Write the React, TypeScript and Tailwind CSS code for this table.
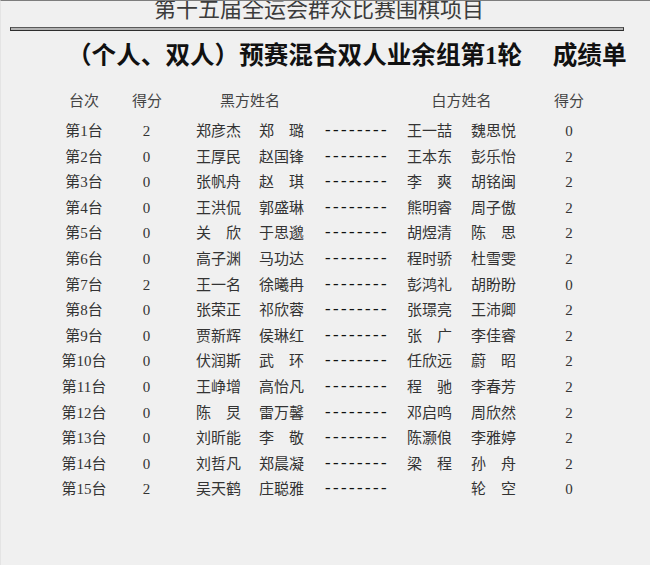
import React from "react";

type Row = {
  b1: string;
  b2: string;
  w1: string;
  w2: string;
  bs: string;
  ws: string;
};

const rows: Row[] = [
  { b1: "郑彦杰", b2: "郑璐", w1: "王一喆", w2: "魏思悦", bs: "2", ws: "0" },
  { b1: "王厚民", b2: "赵国锋", w1: "王本东", w2: "彭乐怡", bs: "0", ws: "2" },
  { b1: "张帆舟", b2: "赵琪", w1: "李爽", w2: "胡铭闽", bs: "0", ws: "2" },
  { b1: "王洪侃", b2: "郭盛琳", w1: "熊明睿", w2: "周子傲", bs: "0", ws: "2" },
  { b1: "关欣", b2: "于思邈", w1: "胡煜清", w2: "陈思", bs: "0", ws: "2" },
  { b1: "高子渊", b2: "马功达", w1: "程时骄", w2: "杜雪雯", bs: "0", ws: "2" },
  { b1: "王一名", b2: "徐曦冉", w1: "彭鸿礼", w2: "胡盼盼", bs: "2", ws: "0" },
  { b1: "张荣正", b2: "祁欣蓉", w1: "张璟亮", w2: "王沛卿", bs: "0", ws: "2" },
  { b1: "贾新辉", b2: "侯琳红", w1: "张广", w2: "李佳睿", bs: "0", ws: "2" },
  { b1: "伏润斯", b2: "武环", w1: "任欣远", w2: "蔚昭", bs: "0", ws: "2" },
  { b1: "王峥增", b2: "高怡凡", w1: "程驰", w2: "李春芳", bs: "0", ws: "2" },
  { b1: "陈炅", b2: "雷万馨", w1: "邓启鸣", w2: "周欣然", bs: "0", ws: "2" },
  { b1: "刘昕能", b2: "李敬", w1: "陈灏俍", w2: "李雅婷", bs: "0", ws: "2" },
  { b1: "刘哲凡", b2: "郑晨凝", w1: "梁程", w2: "孙舟", bs: "0", ws: "2" },
  { b1: "吴天鹤", b2: "庄聪雅", w1: "", w2: "轮空", bs: "2", ws: "0" },
];

function Name({ text, className }: { text: string; className: string }) {
  const chars = Array.from(text);
  if (chars.length === 2) {
    return (
      <div className={`flex justify-between ${className}`}>
        <span>{chars[0]}</span>
        <span>{chars[1]}</span>
      </div>
    );
  }
  return <div className={className}>{text}</div>;
}

export default function App() {
  return (
    <div
      className="w-[650px] h-[565px] bg-[#f0f0f0] border-t border-[#7d7d7d] border-l border-l-[#e4e4e4] overflow-hidden text-[#333]"
      style={{ fontFamily: '"Liberation Serif", "Noto Sans CJK SC", serif' }}
    >
      <div className="ml-[9px] w-[614px]">
        <div className="mt-[-2px] text-center text-[22px] leading-[22px] text-[#3c3c3c] pl-[4px]">
          第十五届全运会群众比赛围棋项目
        </div>
        <div className="mt-[6px] h-[4px] border border-t-[#5a5a5a] border-b-[#2e2e2e] border-l-[#3a3a3a] border-r-[#3a3a3a] bg-[#b3b3b3]" />
      </div>

      <div className="mt-[10px] pl-[66px] text-[24.6px] leading-[30px] font-bold text-[#111] whitespace-pre">
        （个人、双人）预赛混合双人业余组第1轮　 成绩单
      </div>

      <div className="mt-[18px] flex h-[25.6px] items-center text-[15px] leading-[25.6px] text-[#444]">
        <div className="ml-[53px] w-[60px] text-center">台次</div>
        <div className="w-[66px] text-center">得分</div>
        <div className="ml-[16px] w-[108px] text-center">黑方姓名</div>
        <div className="ml-[103px] w-[109px] text-center">白方姓名</div>
        <div className="w-[106px] text-center">得分</div>
      </div>

      <div className="mt-[4.4px] flex flex-col text-[15px] leading-[25.6px]">
        {rows.map((r, i) => (
          <div key={i} className="flex h-[25.6px] items-center">
            <div className="ml-[53px] w-[60px] text-center">第{i + 1}台</div>
            <div className="w-[65px] text-center">{r.bs}</div>
            <Name text={r.b1} className="ml-[17px] w-[45px]" />
            <Name text={r.b2} className="ml-[18px] w-[45px]" />
            <div
              className="ml-[19px] w-[67px] text-[16px] tracking-[-1.6px] text-[#111]"
              style={{ fontFamily: '"Liberation Mono", monospace' }}
            >
              --------
            </div>
            <Name text={r.w1} className="ml-[17px] w-[45px]" />
            <Name text={r.w2} className="ml-[19px] w-[45px]" />
            <div className="w-[106px] text-center">{r.ws}</div>
          </div>
        ))}
      </div>
    </div>
  );
}
